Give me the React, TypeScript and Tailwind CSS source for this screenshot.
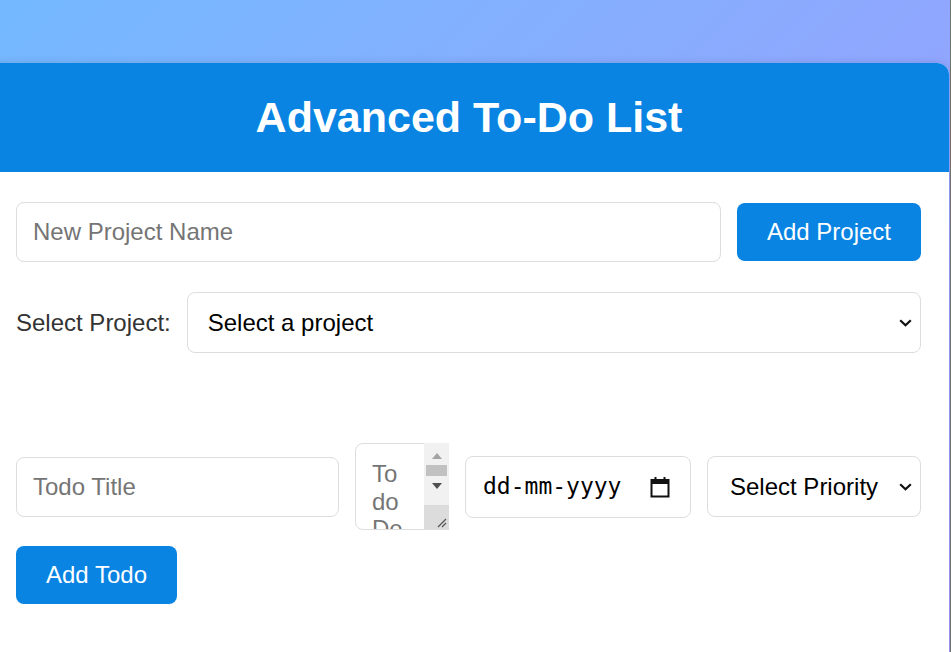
export default function App() {
  const field =
    'border border-[#dddddd] rounded-[8px] bg-white text-[24px] leading-[1.15] outline-none placeholder:text-[#757575]'

  const Chevron = () => (
    <svg
      className="pointer-events-none absolute right-[9px] top-1/2 -translate-y-1/2"
      width="13"
      height="8"
      viewBox="0 0 13 8"
      fill="none"
    >
      <path d="M1.2 1.2 L6.5 6.3 L11.8 1.2" stroke="#111" strokeWidth="2.2" />
    </svg>
  )

  return (
    <div
      className="min-h-screen overflow-hidden border-r border-[#707070] bg-[linear-gradient(135deg,#74b9ff,#a29bfe)] pt-[63px]"
      style={{ fontFamily: '"Liberation Sans", Arial, sans-serif' }}
    >
      <div className="-ml-[11px] w-[960px] min-h-[600px] rounded-t-[12px] bg-white shadow-[0_0_10px_rgba(0,0,0,0.12)]">
        {/* Header */}
        <header className="flex h-[109px] items-center justify-center rounded-t-[12px] bg-[#0984e3]">
          <h1 className="text-[43px] font-bold text-white">Advanced To-Do List</h1>
        </header>

        <div className="pl-[27px] pr-[28px] pt-[30px]">
          {/* New project */}
          <div className="flex items-center gap-4">
            <input
              type="text"
              placeholder="New Project Name"
              className={`${field} h-[60px] flex-1 px-4`}
            />
            <button className="h-[58px] w-[184px] rounded-[8px] bg-[#0984e3] text-[24px] text-white">
              Add Project
            </button>
          </div>

          {/* Project select */}
          <div className="mt-[30px] flex items-center gap-4">
            <label className="text-[24px] text-[#333333]">Select Project:</label>
            <div className="relative flex-1">
              <select
                className={`${field} h-[61px] w-full appearance-none pl-[20px] pr-10 text-black`}
                defaultValue=""
              >
                <option value="">Select a project</option>
              </select>
              <Chevron />
            </div>
          </div>

          {/* Empty project list */}
          <div className="h-[90px]"></div>

          {/* New todo */}
          <div className="flex items-center gap-4">
            <input
              type="text"
              placeholder="Todo Title"
              className={`${field} h-[60px] w-[323px] px-4`}
            />
            <div className="relative h-[87px] w-[94px] shrink-0">
              <textarea
                placeholder="Todo Description"
                className={`${field} h-full w-full resize-none overflow-hidden py-4 pl-4 pr-[41px]`}
              ></textarea>
              {/* scrollbar + resizer */}
              <div className="absolute right-0 top-0 flex h-full w-[25px] flex-col">
                <div className="flex flex-1 flex-col items-center bg-[#f1f1f1] pt-[10px]">
                  <svg width="10" height="6" viewBox="0 0 10 6">
                    <path d="M0 6 L5 0 L10 6 Z" fill="#a3a3a3" />
                  </svg>
                  <div className="mt-[6px] h-[11px] w-[21px] bg-[#c1c1c1]"></div>
                  <svg className="mt-[7px]" width="10" height="6" viewBox="0 0 10 6">
                    <path d="M0 0 L10 0 L5 6 Z" fill="#505050" />
                  </svg>
                </div>
                <div className="relative h-[25px] bg-[#dcdcdc]">
                  <svg className="absolute bottom-[2px] right-[2px]" width="12" height="12" viewBox="0 0 12 12">
                    <path d="M11 3 L3 11 M11 7 L7 11" stroke="#555" strokeWidth="1.2" />
                  </svg>
                </div>
              </div>
            </div>
            <div className={`${field} flex h-[62px] w-[226px] shrink-0 items-center justify-between pl-[17px] pr-[20px]`}>
              <span className="text-[23px] text-black" style={{ fontFamily: '"DejaVu Sans Mono", monospace' }}>
                dd-mm-yyyy
              </span>
              <svg width="20" height="22" viewBox="0 0 20 22" fill="none">
                <rect x="1.5" y="4" width="17" height="16.5" stroke="#111" strokeWidth="2" />
                <rect x="1.5" y="4" width="17" height="4" fill="#111" />
                <rect x="4.5" y="1" width="2" height="4" fill="#111" />
                <rect x="13.5" y="1" width="2" height="4" fill="#111" />
              </svg>
            </div>
            <div className="relative flex-1">
              <select
                className={`${field} h-[61px] w-full appearance-none pl-[22px] pr-9 text-black`}
                defaultValue=""
              >
                <option value="">Select Priority</option>
                <option value="low">Low</option>
                <option value="medium">Medium</option>
                <option value="high">High</option>
              </select>
              <Chevron />
            </div>
          </div>

          <button className="mt-4 h-[58px] w-[161px] rounded-[8px] bg-[#0984e3] text-[24px] text-white">
            Add Todo
          </button>
        </div>
      </div>
    </div>
  )
}
